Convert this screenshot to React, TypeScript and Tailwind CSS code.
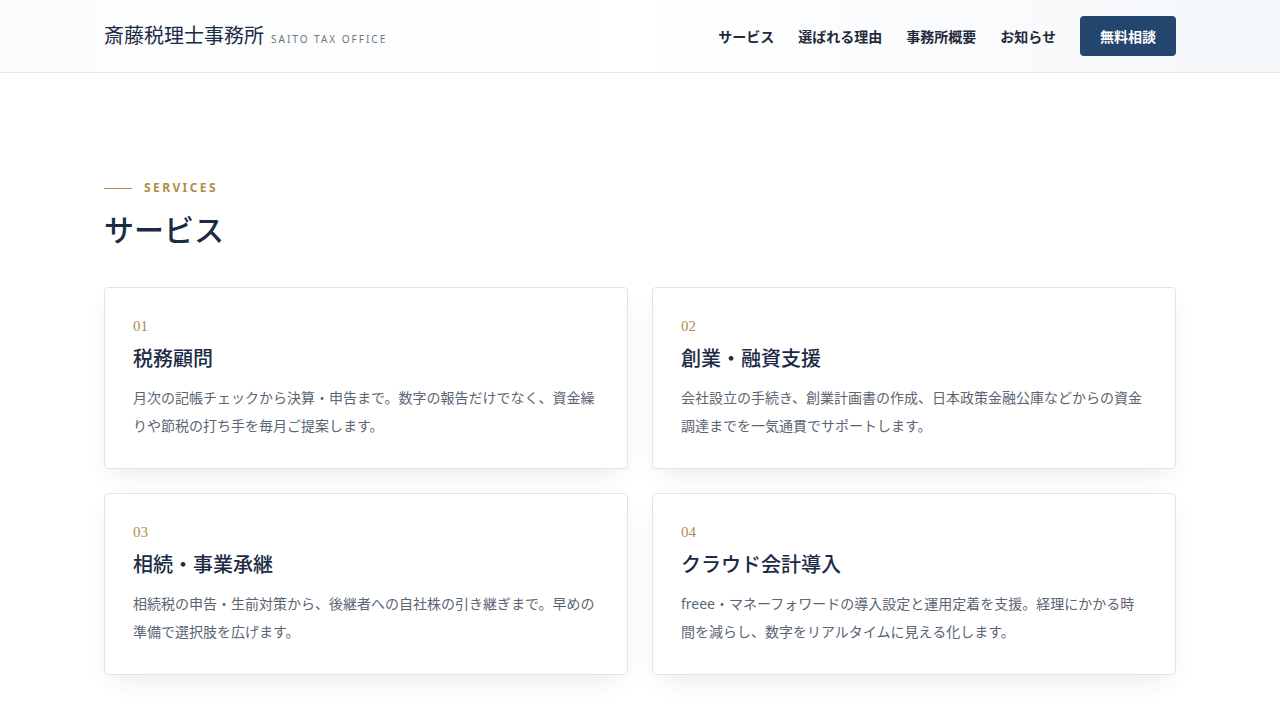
import React from 'react';

const services = [
  {
    no: '01',
    title: '税務顧問',
    body: '月次の記帳チェックから決算・申告まで。数字の報告だけでなく、資金繰りや節税の打ち手を毎月ご提案します。',
  },
  {
    no: '02',
    title: '創業・融資支援',
    body: '会社設立の手続き、創業計画書の作成、日本政策金融公庫などからの資金調達までを一気通貫でサポートします。',
  },
  {
    no: '03',
    title: '相続・事業承継',
    body: '相続税の申告・生前対策から、後継者への自社株の引き継ぎまで。早めの準備で選択肢を広げます。',
  },
  {
    no: '04',
    title: 'クラウド会計導入',
    body: 'freee・マネーフォワードの導入設定と運用定着を支援。経理にかかる時間を減らし、数字をリアルタイムに見える化します。',
  },
];

const sans = "font-['Noto_Sans','Noto_Sans_CJK_JP',sans-serif]";
const serif = "font-['Liberation_Serif','Noto_Sans_CJK_JP',serif]";

export default function App() {
  return (
    <div className={`min-h-screen bg-white ${sans} text-[#1b2b45]`}>
      <header className="h-[73px] border-b border-[#e3e7ec] bg-gradient-to-r from-[#fbfcfd] via-white to-[#f4f7fa]">
        <div className="mx-auto flex h-full w-[1072px] items-center justify-between">
          <div className="flex items-baseline gap-[7px]">
            <span className={`${serif} text-[20px] font-normal tracking-normal text-[#1b2b45]`}>斎藤税理士事務所</span>
            <span className="text-[10px] tracking-[0.2em] text-[#6b7685]">SAITO TAX OFFICE</span>
          </div>
          <nav className="flex items-center gap-6 text-[14px] font-bold text-[#1f2a3a]">
            <a>サービス</a>
            <a>選ばれる理由</a>
            <a>事務所概要</a>
            <a>お知らせ</a>
            <button className="h-10 w-24 rounded-[4px] bg-[#24456e] text-[14px] font-bold text-white">無料相談</button>
          </nav>
        </div>
      </header>

      <section className="mx-auto w-[1072px] pt-[106px]">
        <div className="flex items-center gap-3">
          <span className="h-px w-7 bg-[#b08d4a]" />
          <span className="text-[12px] font-bold tracking-[0.2em] text-[#b08d4a]">SERVICES</span>
        </div>
        <h2 className={`${serif} mt-[12px] text-[30px] font-medium leading-[44px] text-[#1b2b45]`}>サービス</h2>

        <div className="mt-[34px] grid grid-cols-2 gap-6">
          {services.map((s) => (
            <div
              key={s.no}
              className="h-[182px] rounded-[4px] border border-[#e1e5ea] bg-white px-7 pt-[28px] shadow-[0_10px_24px_-8px_rgba(30,50,80,0.12)]"
            >
              <div className={`${serif} text-[15px] leading-5 text-[#b08d4a]`}>{s.no}</div>
              <h3 className={`${serif} mt-[9px] text-[20px] font-medium leading-7 text-[#1b2b45]`}>{s.title}</h3>
              <p className="mt-[11px] text-[14px] leading-[28px] text-[#5b6572]">{s.body}</p>
            </div>
          ))}
        </div>
      </section>
    </div>
  );
}
